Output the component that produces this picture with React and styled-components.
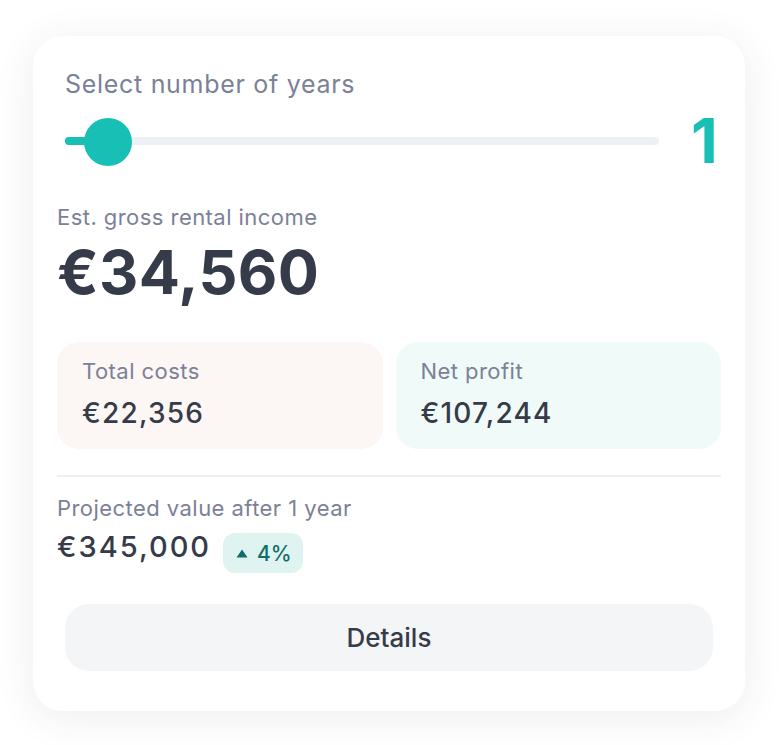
import React, { useState } from 'react';
import styled, { createGlobalStyle } from 'styled-components';

const GlobalStyle = createGlobalStyle`
    body {
        margin: 0;
        background: #ffffff;
        font-family: Inter, 'Noto Sans', sans-serif;
        -webkit-font-smoothing: antialiased;
    }
`;

const Page = styled.div`
    padding: 36px 34px 34px 33px;
`;

const Card = styled.div`
    width: 712px;
    box-sizing: border-box;
    padding: 32px 24px 40px;
    background: #ffffff;
    border-radius: 30px;
    box-shadow: 0 6px 40px rgba(40, 50, 80, 0.09);
    display: flex;
    flex-direction: column;
`;

const SliderSection = styled.div`
    padding: 0 6px 0 8px;
`;

const Title = styled.div`
    font-size: 25px;
    line-height: 33px;
    letter-spacing: 0.7px;
    color: #7b8197;
`;

const Label = styled.div`
    font-size: 22px;
    line-height: 30px;
    letter-spacing: 0.45px;
    color: #7b8197;
    font-weight: 400;
`;

const SliderRow = styled.div`
    display: flex;
    align-items: center;
    gap: 32px;
    margin-top: 15px;
    height: 50px;
`;

const Track = styled.div`
    position: relative;
    flex: 1;
    height: 8px;
    border-radius: 4px;
    background: #edf1f5;
`;

const Fill = styled.div`
    height: 100%;
    border-radius: 4px;
    background: #17bfb5;
`;

const Thumb = styled.div`
    position: absolute;
    top: 50%;
    width: 48px;
    height: 48px;
    margin-left: -24px;
    margin-top: -23px;
    border-radius: 50%;
    background: #17bfb5;
`;

const YearValue = styled.div`
    font-size: 62px;
    line-height: 50px;
    font-weight: 700;
    color: #17bfb5;
    width: 24px;
    text-align: right;
`;

const IncomeSection = styled.div`
    margin-top: 36px;
`;

const BigAmount = styled.div`
    margin-top: 9px;
    font-size: 61px;
    line-height: 62px;
    font-weight: 700;
    letter-spacing: 0.3px;
    color: #363b4a;
`;

const StatGrid = styled.div`
    display: grid;
    grid-template-columns: 1fr 1fr;
    gap: 13px;
    margin-top: 39px;
`;

const StatCard = styled.div`
    height: 107px;
    box-sizing: border-box;
    padding: 14px 25px;
    border-radius: 22px;
    background: ${({ tone }) => (tone === 'teal' ? '#f0faf9' : '#fcf6f4')};
`;

const Amount = styled.div`
    margin-top: ${({ flush }) => (flush ? 0 : 9)}px;
    font-size: ${({ large }) => (large ? 29 : 28)}px;
    line-height: 36px;
    font-weight: 500;
    letter-spacing: ${({ large }) => (large ? 2 : 1.2)}px;
    color: #363b4a;
`;

const Divider = styled.hr`
    margin: 26px 0 0;
    border: none;
    height: 2px;
    background: #eef1f4;
`;

const ProjectedSection = styled.div`
    margin-top: 16px;
`;

const ValueRow = styled.div`
    display: flex;
    align-items: flex-start;
    gap: 12px;
    margin-top: 6px;
`;

const Badge = styled.span`
    display: inline-flex;
    align-items: center;
    gap: 9px;
    height: 40px;
    margin-top: 4px;
    padding: 0 11px 0 13px;
    border-radius: 12px;
    background: #dff3f1;
    color: #0f6e69;
    font-size: 21px;
    font-weight: 500;
`;

const DetailsButton = styled.button`
    margin: 31px 8px 0;
    height: 67px;
    border: none;
    border-radius: 24px;
    background: #f4f5f7;
    font-family: inherit;
    font-size: 26px;
    font-weight: 500;
    color: #363b4a;
    cursor: pointer;
`;

const UpArrow = () => (
    <svg width="12" height="9" viewBox="0 0 12 9">
        <path d="M6 0.5 L11.5 8.5 H0.5 Z" fill="#0f6e69" />
    </svg>
);

const App = () => {
    const [years] = useState(1);
    const pct = 7.3;

    return (
        <Page>
            <GlobalStyle />
            <Card>
                <SliderSection>
                    <Title>Select number of years</Title>
                    <SliderRow>
                        <Track>
                            <Fill style={{ width: `${pct}%` }} />
                            <Thumb style={{ left: `${pct}%` }} />
                        </Track>
                        <YearValue>{years}</YearValue>
                    </SliderRow>
                </SliderSection>

                <IncomeSection>
                    <Label>Est. gross rental income</Label>
                    <BigAmount>€34,560</BigAmount>
                </IncomeSection>

                <StatGrid>
                    <StatCard>
                        <Label>Total costs</Label>
                        <Amount>€22,356</Amount>
                    </StatCard>
                    <StatCard tone="teal">
                        <Label>Net profit</Label>
                        <Amount>€107,244</Amount>
                    </StatCard>
                </StatGrid>

                <Divider />

                <ProjectedSection>
                    <Label>Projected value after {years} year</Label>
                    <ValueRow>
                        <Amount as="span" flush large>€345,000</Amount>
                        <Badge>
                            <UpArrow />
                            4%
                        </Badge>
                    </ValueRow>
                </ProjectedSection>

                <DetailsButton>Details</DetailsButton>
            </Card>
        </Page>
    );
};

export default App;
